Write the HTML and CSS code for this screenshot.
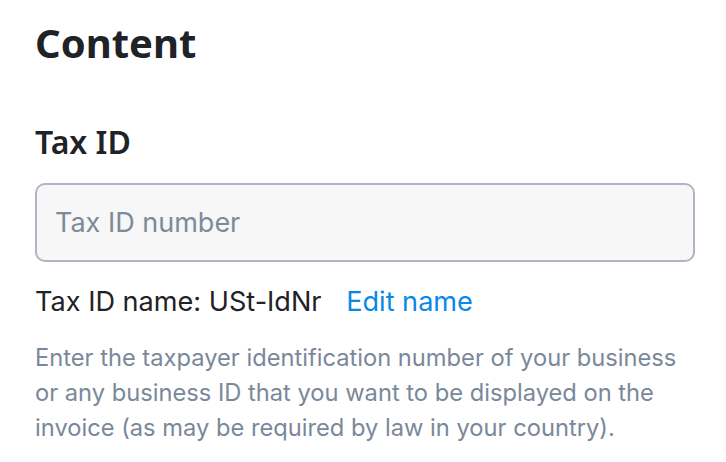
FILE: index.html
```html
<!DOCTYPE html>
<html lang="en">
<head>
<meta charset="utf-8">
<title>Content</title>
<link rel="stylesheet" href="styles.css">
</head>
<body>
<main class="page">
  <h1 class="title">Content</h1>
  <section class="field">
    <h2 class="field-label">Tax ID</h2>
    <input class="field-input" type="text" placeholder="Tax ID number">
    <p class="field-meta">Tax ID name: USt-IdNr <a class="field-link" href="#">Edit name</a></p>
    <p class="field-help">Enter the taxpayer identification number of your business or any business ID that you want to be displayed on the invoice (as may be required by law in your country).</p>
  </section>
</main>
</body>
</html>
```
FILE: styles.css
```css
html, body {
  margin: 0;
  padding: 0;
  background: #ffffff;
}

.page {
  padding: 19px 31px 0 35px;
  font-family: Inter, "Noto Sans", "Liberation Sans", sans-serif;
  color: #212529;
}

.title {
  margin: 0;
  font-family: "Noto Sans", Inter, sans-serif;
  font-size: 40px;
  font-weight: 700;
  line-height: 48px;
  color: #1f2226;
}

.field {
  display: flex;
  flex-direction: column;
  margin-top: 55px;
}

.field-label {
  margin: 0;
  font-family: "Noto Sans", Inter, sans-serif;
  font-size: 32px;
  font-weight: 600;
  line-height: 40px;
  color: #1f2226;
}

.field-input {
  box-sizing: border-box;
  margin-top: 21px;
  width: 660px;
  height: 79px;
  padding: 0 18px;
  border: 2px solid #adb6c1;
  border-radius: 10px;
  background: #f7f7f7;
  font-family: Inter, "Noto Sans", sans-serif;
  font-size: 27px;
  color: #212529;
  outline: none;
}

.field-input::placeholder {
  color: #7d8a9b;
  opacity: 1;
}

.field-meta {
  margin: 23px 0 0;
  font-size: 27.1px;
  line-height: 34px;
  color: #1f2226;
}

.field-link {
  margin-left: 17px;
  color: #0a88e6;
  text-decoration: none;
}

.field-help {
  margin: 21px 0 0;
  width: 660px;
  font-size: 23.7px;
  line-height: 35px;
  color: #7a889a;
}
```
